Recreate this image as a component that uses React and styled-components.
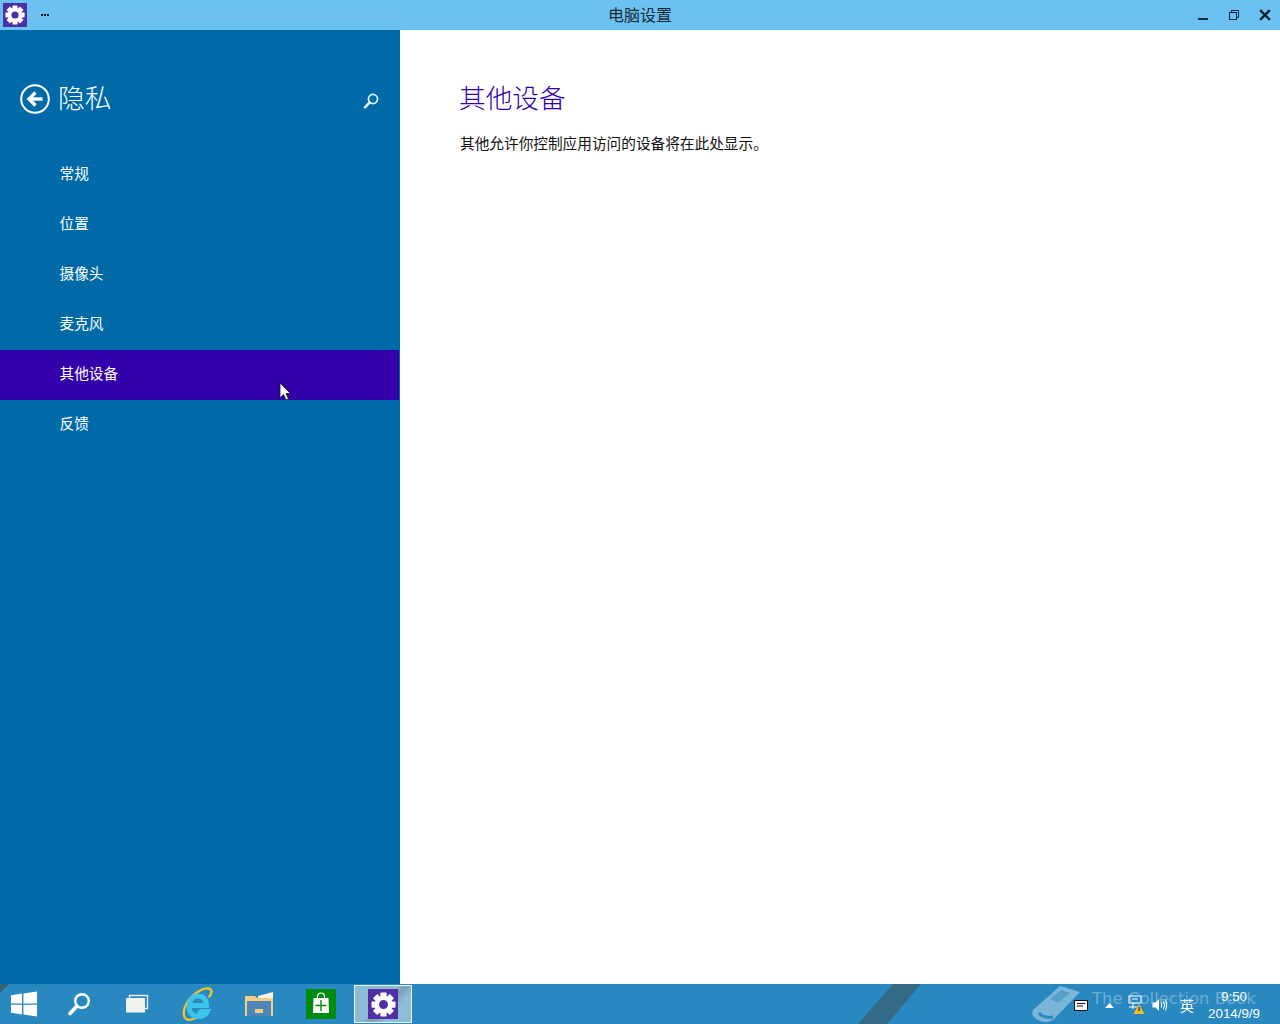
import React from 'react';
import styled, { createGlobalStyle } from 'styled-components';

const CJK = '"Noto Sans CJK SC", "Noto Sans", sans-serif';

const Global = createGlobalStyle`
  html, body { margin: 0; padding: 0; background: #fff; }
  body { font-family: ${CJK}; overflow: hidden; }
`;

const Screen = styled.div`
  position: relative;
  width: 1280px;
  height: 1024px;
  display: flex;
  flex-direction: column;
  overflow: hidden;
`;

const TitleBar = styled.header`
  position: relative;
  height: 30px;
  flex: none;
  background: #6bc1f1;
  display: flex;
  align-items: center;
  justify-content: space-between;
`;
const TitleLeft = styled.div`
  display: flex;
  align-items: center;
  padding-left: 3px;
  gap: 14px;
`;
const AppTile = styled.div`
  width: 24px;
  height: 24px;
  background: #4f2ea6;
  display: flex;
  align-items: center;
  justify-content: center;
`;
const Dots = styled.div`
  display: flex;
  gap: 1px;
  margin-top: -1px;
`;
const Dot = styled.i`
  display: block;
  width: 2px;
  height: 2px;
  background: #111;
`;
const TitleText = styled.div`
  position: absolute;
  left: 0;
  right: 0;
  top: 0;
  height: 30px;
  text-align: center;
  font-size: 16px;
  line-height: 29px;
  color: #1a2a33;
`;
const WinButtons = styled.div`
  display: flex;
  align-items: center;
`;
const WinButton = styled.div`
  width: 31px;
  height: 30px;
  display: flex;
  align-items: center;
  justify-content: center;
`;

const Body = styled.div`
  flex: 1;
  display: flex;
  min-height: 0;
`;
const Sidebar = styled.aside`
  width: 400px;
  flex: none;
  background: #006aa8;
  display: flex;
  flex-direction: column;
`;
const SideHeader = styled.div`
  height: 120px;
  padding: 38px 21px 0 20px;
  box-sizing: border-box;
  display: flex;
  align-items: flex-start;
`;
const SideTitle = styled.h1`
  margin: -1px 0 0 8px;
  flex: 1;
  font-size: 26.67px;
  line-height: 60px;
  height: 60px;
  font-weight: 300;
  color: #fff;
`;
const BackIcon = styled.div`
  width: 30px;
  height: 30px;
  margin-top: 16px;
`;
const SearchIcon = styled.div`
  width: 16px;
  height: 16px;
  margin-top: 22px;
`;
const Nav = styled.nav`
  display: flex;
  flex-direction: column;
`;
const NavItem = styled.div`
  height: 50px;
  width: 399px;
  box-sizing: border-box;
  padding-left: 59.5px;
  padding-bottom: 6px;
  display: flex;
  align-items: center;
  font-size: 14.67px;
  color: #fff;
  background: ${p => (p.$active ? '#3300aa' : 'transparent')};
`;

const Main = styled.main`
  flex: 1;
  background: #fff;
  padding: 37px 60px 0;
`;
const Heading = styled.h2`
  margin: 0 0 0 -1px;
  font-size: 26.67px;
  line-height: 60px;
  font-weight: 300;
  color: #3300aa;
`;
const Para = styled.p`
  margin: 6px 0 0;
  font-size: 14.67px;
  line-height: 20px;
  color: #111;
`;

const Taskbar = styled.footer`
  position: relative;
  height: 40px;
  flex: none;
  background: #2a88c0;
  display: flex;
  align-items: center;
  overflow: hidden;
`;
const Wall = styled.svg`
  position: absolute;
  inset: 0;
  width: 1280px;
  height: 40px;
`;
const Tasks = styled.div`
  position: relative;
  display: flex;
  align-items: center;
  height: 40px;
`;
const TaskSlot = styled.div`
  width: ${p => p.$w}px;
  height: 40px;
  display: flex;
  align-items: center;
  justify-content: center;
  flex: none;
`;
const ActiveSlot = styled.div`
  width: 58px;
  height: 38px;
  box-sizing: border-box;
  border: 1px solid #e8f2f8;
  background: linear-gradient(135deg, #8dbbd6 0 45%, #7f9fb2 55%, #8fbdd8 70%);
  display: flex;
  align-items: center;
  justify-content: center;
`;
const StoreTile = styled.div`
  width: 30px;
  height: 30px;
  background: #008a0e;
  display: flex;
  align-items: center;
  justify-content: center;
`;
const SettingsTile = styled.div`
  width: 30px;
  height: 30px;
  background: #4f2ea6;
  display: flex;
  align-items: center;
  justify-content: center;
`;
const WaterText = styled.div`
  position: absolute;
  left: 1092px;
  top: 3px;
  font-family: "DejaVu Sans", sans-serif;
  font-size: 16.5px;
  line-height: 24px;
  color: rgba(255, 255, 255, 0.32);
  white-space: nowrap;
`;
const WaterBook = styled.svg`
  position: absolute;
  left: 1030px;
  top: 0;
  width: 52px;
  height: 40px;
`;
const Tray = styled.div`
  position: absolute;
  right: 0;
  top: 0;
  height: 40px;
  width: 213px;
  display: flex;
  align-items: center;
`;
const TrayIcon = styled.div`
  width: ${p => p.$w}px;
  height: 40px;
  flex: none;
  display: flex;
  align-items: center;
  justify-content: center;
  padding-top: 2px;
  box-sizing: border-box;
`;
const ImeGlyph = styled.span`
  font-size: 14px;
  line-height: 16px;
  color: #fff;
`;
const Clock = styled.div`
  flex: 1;
  padding-right: 20px;
  padding-top: 1px;
  text-align: right;
  color: #fff;
  font-family: "Liberation Sans", ${CJK};
  font-size: 13.33px;
  line-height: 17px;
`;
const ClockTime = styled.div`
  padding-right: 13px;
`;
const Pointer = styled.svg`
  position: absolute;
  left: 279px;
  top: 382px;
  width: 13px;
  height: 20px;
`;

const Gear = ({ size = 20 }) => {
  const teeth = [0, 45, 90, 135, 180, 225, 270, 315];
  return (
    <svg width={size} height={size} viewBox="0 0 24 24">
      <g fill="#fff">
        {teeth.map(a => (
          <rect key={a} x="9" y="0.5" width="6" height="6" rx="0.8" transform={`rotate(${a} 12 12)`} />
        ))}
      </g>
      <circle cx="12" cy="12" r="6.4" fill="none" stroke="#fff" strokeWidth="4.2" />
    </svg>
  );
};

const Magnifier = ({ size, color = '#fff', w = 2 }) => (
  <svg width={size} height={size} viewBox="0 0 24 24" fill="none" stroke={color}>
    <circle cx="15" cy="9" r="6.8" strokeWidth={w} />
    <path d="M10 14 L3 21.5" strokeWidth={w * 1.5} strokeLinecap="round" />
  </svg>
);

const items = ['常规', '位置', '摄像头', '麦克风', '其他设备', '反馈'];

export default function App() {
  return (
    <Screen>
      <Global />
      <TitleBar>
        <TitleLeft>
          <AppTile><Gear size={20} /></AppTile>
          <Dots><Dot /><Dot /><Dot /></Dots>
        </TitleLeft>
        <TitleText>电脑设置</TitleText>
        <WinButtons>
          <WinButton>
            <svg width="12" height="12" viewBox="0 0 12 12"><rect x="1" y="9" width="10" height="2" fill="#0d2a3f" /></svg>
          </WinButton>
          <WinButton>
            <svg width="12" height="12" viewBox="0 0 12 12" fill="none" stroke="#0d2a3f">
              <rect x="1.5" y="3.5" width="7" height="7" />
              <path d="M3.5 3V1.5H10.5V8.5H9" />
            </svg>
          </WinButton>
          <WinButton>
            <svg width="12" height="12" viewBox="0 0 12 12" stroke="#0a1f30" strokeWidth="2.4" strokeLinecap="square">
              <path d="M2 2 L10 10 M10 2 L2 10" />
            </svg>
          </WinButton>
        </WinButtons>
      </TitleBar>

      <Body>
        <Sidebar>
          <SideHeader>
            <BackIcon>
              <svg width="30" height="30" viewBox="0 0 30 30" fill="none" stroke="#fff">
                <circle cx="15" cy="15" r="13.8" strokeWidth="2" />
                <path d="M22.5 15 H10" strokeWidth="3.4" />
                <path d="M15.5 8.5 L9 15 L15.5 21.5" strokeWidth="3.4" />
              </svg>
            </BackIcon>
            <SideTitle>隐私</SideTitle>
            <SearchIcon><Magnifier size={16} color="#e6f6ff" w={2.6} /></SearchIcon>
          </SideHeader>
          <Nav>
            {items.map(t => (
              <NavItem key={t} $active={t === '其他设备'}>{t}</NavItem>
            ))}
          </Nav>
        </Sidebar>
        <Main>
          <Heading>其他设备</Heading>
          <Para>其他允许你控制应用访问的设备将在此处显示。</Para>
        </Main>
      </Body>

      <Taskbar>
        <Wall viewBox="0 0 1280 40">
          <path d="M0 0 H9 L0 9 Z" fill="#3a5f78" />
          <path d="M893 0 H921 L887 40 H858 Z" fill="#336a86" />
        </Wall>
        <Tasks>
          <TaskSlot $w={48}>
            <svg width="28" height="26" viewBox="0 0 28 26" fill="#fff">
              <path d="M1 4.2 L12 2.6 V12.4 H1 Z" />
              <path d="M13.4 2.4 L27 0.4 V12.4 H13.4 Z" />
              <path d="M1 13.8 H12 V23.4 L1 21.8 Z" />
              <path d="M13.4 13.8 H27 V25.6 L13.4 23.6 Z" />
            </svg>
          </TaskSlot>
          <TaskSlot $w={62}><Magnifier size={24} color="#fff" w={2.4} /></TaskSlot>
          <TaskSlot $w={54}>
            <svg width="24" height="20" viewBox="0 0 24 20">
              <rect x="4.5" y="1.5" width="18" height="13" fill="none" stroke="#e8eef2" strokeWidth="1.4" />
              <rect x="1" y="4" width="19" height="14.5" fill="#f2f2ee" />
            </svg>
          </TaskSlot>
          <TaskSlot $w={66}>
            <svg width="32" height="34" viewBox="0 0 32 34" fill="none">
              <path d="M4 31 C0 24 6 10 20 3 C25 0.5 30 1 30.5 4 C31 6.5 29 9 27.5 10.5" stroke="#f2c22e" strokeWidth="2.4" />
              <path d="M4 31 C6 33.5 11 33 16 30.5" stroke="#f2c22e" strokeWidth="2.2" />
              <path d="M9 18.5 H25.5 C25.5 12 22 9 17 9 C12 9 8 13 8 19.5 C8 26 12 29.5 18 29.5 C22 29.5 25 27.5 26.5 24.5 H20.5 C19.5 25.5 18 26 16.5 26" stroke="#3cc4ea" strokeWidth="5" />
            </svg>
          </TaskSlot>
          <TaskSlot $w={57}>
            <svg width="30" height="26" viewBox="0 0 30 26">
              <path d="M1 5 H11 L13 7 H29 V25 H1 Z" fill="#f5cc83" />
              <path d="M14 5 L29 1 V7 H14 Z" fill="#f7f3e6" />
              <rect x="3" y="10" width="24" height="15" fill="#4f85b8" />
              <rect x="11" y="18" width="8" height="4" fill="#f5cc83" />
            </svg>
          </TaskSlot>
          <TaskSlot $w={67}>
            <StoreTile>
              <svg width="20" height="24" viewBox="0 0 20 24" fill="#fff">
                <path d="M6.5 6 V4.5 a3.5 3.5 0 0 1 7 0 V6" fill="none" stroke="#fff" strokeWidth="1.2" />
                <path d="M2.5 6 H17.5 L18 21 H2 Z" />
                <path d="M10 8 V19 M4.5 13.5 H15.5" stroke="#008a0e" strokeWidth="1.4" />
              </svg>
            </StoreTile>
          </TaskSlot>
          <ActiveSlot>
            <SettingsTile><Gear size={25} /></SettingsTile>
          </ActiveSlot>
        </Tasks>
        <WaterBook viewBox="0 0 52 40">
          <path d="M3 26 L30 2 L50 8 L24 35 C18 40 8 38 4 33 C2 31 2 28 3 26 Z" fill="rgba(255,255,255,0.38)" />
          <path d="M9 29 C12 33 18 34 23 33" stroke="#2a88c0" strokeWidth="3" fill="none" />
          <path d="M20 15 L31 6 L40 9 L28 19 Z" fill="#2a88c0" opacity="0.45" />
        </WaterBook>
        <WaterText>The Collection Book</WaterText>
        <Tray>
          <TrayIcon $w={28}>
            <svg width="14" height="11" viewBox="0 0 14 11">
              <rect x="0.5" y="0.5" width="13" height="10" fill="#f4f8fa" stroke="#111" />
              <path d="M3 3.5 H11 M3 6 H9" stroke="#111" />
            </svg>
          </TrayIcon>
          <TrayIcon $w={28}>
            <svg width="9" height="5" viewBox="0 0 9 5"><path d="M0 5 L4.5 0 L9 5 Z" fill="#fff" /></svg>
          </TrayIcon>
          <TrayIcon $w={26}>
            <svg width="17" height="20" viewBox="0 0 17 20" fill="none">
              <rect x="1" y="1" width="12" height="7" stroke="#fff" />
              <path d="M4 4 H10 M1 12 H9" stroke="#fff" />
              <path d="M5 8 V14" stroke="#fff" />
              <path d="M11 9 L16.5 19 H5.5 Z" fill="#f4c020" />
              <rect x="10.5" y="12" width="1.2" height="4" fill="#222" />
            </svg>
          </TrayIcon>
          <TrayIcon $w={22}>
            <svg width="16" height="14" viewBox="0 0 16 14" fill="none">
              <path d="M0.5 4.5 H3.5 L7 1 V13 L3.5 9.5 H0.5 Z" fill="#fff" />
              <path d="M9 4.5 Q10.5 7 9 9.5 M11.5 3 Q13.5 7 11.5 11 M13.5 1.5 Q16 7 13.5 12.5" stroke="#fff" />
            </svg>
          </TrayIcon>
          <TrayIcon $w={32}><ImeGlyph>英</ImeGlyph></TrayIcon>
          <Clock>
            <ClockTime>9:50</ClockTime>
            <div>2014/9/9</div>
          </Clock>
        </Tray>
      </Taskbar>

      <Pointer viewBox="0 0 13 20">
        <path d="M1 1 V16 L4.5 12.5 L7 18 L9.5 17 L7 11.5 H11.5 Z" fill="#fff" stroke="#111" strokeWidth="0.8" />
      </Pointer>
    </Screen>
  );
}
